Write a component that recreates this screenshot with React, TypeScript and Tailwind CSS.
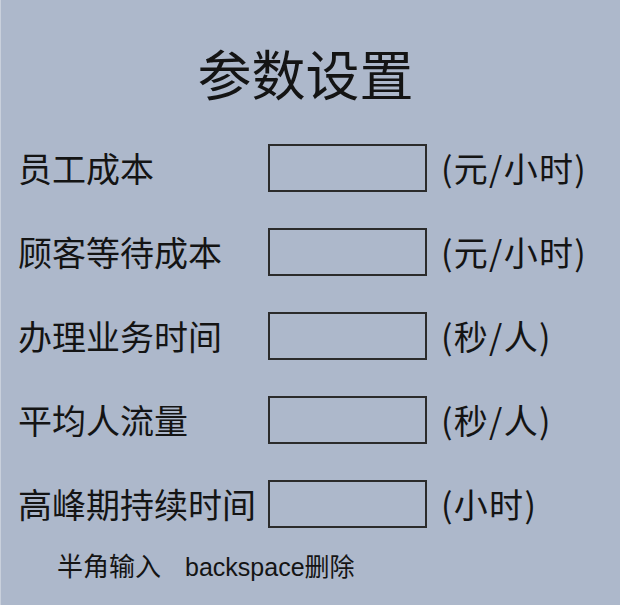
const rows = [
  { label: "员工成本", unit: "(元/小时)" },
  { label: "顾客等待成本", unit: "(元/小时)" },
  { label: "办理业务时间", unit: "(秒/人)" },
  { label: "平均人流量", unit: "(秒/人)" },
  { label: "高峰期持续时间", unit: "(小时)" },
]

export default function App() {
  return (
    <div className="w-[620px] h-[605px] bg-[#adb8cb] border-l border-[#c9d0dc] text-[#141414] font-['Noto_Sans_CJK_SC','Noto_Sans',sans-serif] overflow-hidden">
      <h1 className="pt-[46px] pr-[10px] text-center text-[54px] leading-[54px] font-normal">参数设置</h1>
      <div className="mt-[44px] pl-[17px] flex flex-col gap-[36px]">
        {rows.map((r) => (
          <div key={r.label} className="flex items-center h-[48px]">
            <span className="w-[250px] text-[34px] leading-none whitespace-nowrap">{r.label}</span>
            <input
              type="text"
              className="w-[159px] h-[48px] border-2 border-[#2b2b2b] bg-transparent outline-none"
            />
            <span className="ml-[14px] text-[34px] leading-none tracking-[1.3px] whitespace-nowrap">{r.unit}</span>
          </div>
        ))}
      </div>
      <p className="mt-[27px] pl-[56px] text-[26px] leading-[25px] font-['Liberation_Sans','Noto_Sans_CJK_SC',sans-serif] whitespace-nowrap">
        半角输入<span className="ml-[24px] text-[25px]">backspace删除</span>
      </p>
    </div>
  )
}
